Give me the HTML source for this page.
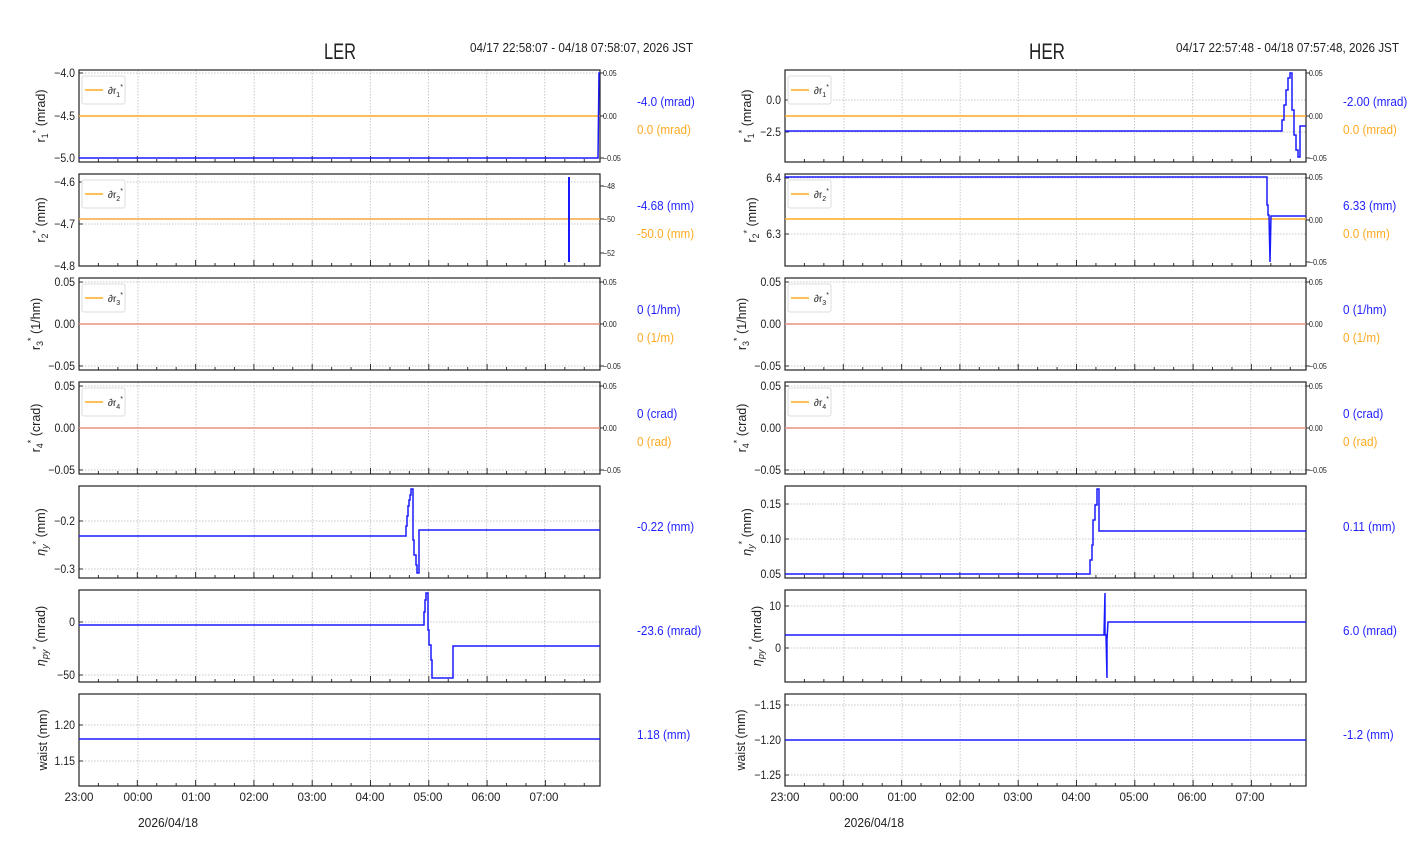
<!DOCTYPE html>
<html><head><meta charset="utf-8"><style>
body{margin:0;background:#fff;width:1412px;height:864px;overflow:hidden}
svg{display:block}
text{font-family:"Liberation Sans Narrow","Liberation Sans",sans-serif;fill:#222}
.t{font-size:12px}
.s{font-size:8px}
.b{fill:#1f1fff;font-size:13px}
.o{fill:#ffaa22;font-size:13px}
.yl{font-family:"DejaVu Sans","Liberation Sans",sans-serif;font-size:12.5px}
</style></head><body>
<svg id="g" width="1412" height="864" xmlns="http://www.w3.org/2000/svg">
<g id="dyn"></g>
<text x="340" y="59" text-anchor="middle" style="font-size:22px" textLength="32" lengthAdjust="spacingAndGlyphs">LER</text>
<text x="470" y="52" style="font-size:13px" textLength="223" lengthAdjust="spacingAndGlyphs">04/17 22:58:07 - 04/18 07:58:07, 2026 JST</text>
<text x="1047" y="59" text-anchor="middle" style="font-size:22px" textLength="36" lengthAdjust="spacingAndGlyphs">HER</text>
<text x="1176" y="52" style="font-size:13px" textLength="223" lengthAdjust="spacingAndGlyphs">04/17 22:57:48 - 04/18 07:57:48, 2026 JST</text>

<!-- LEFT y tick labels -->
<g class="t" text-anchor="end" transform="translate(75,0) scale(0.88,1) translate(-75,0)">
<text x="75" y="77">−4.0</text><text x="75" y="120">−4.5</text><text x="75" y="162">−5.0</text>
<text x="75" y="186">−4.6</text><text x="75" y="228">−4.7</text><text x="75" y="270">−4.8</text>
<text x="75" y="286">0.05</text><text x="75" y="328">0.00</text><text x="75" y="370">−0.05</text>
<text x="75" y="390">0.05</text><text x="75" y="432">0.00</text><text x="75" y="474">−0.05</text>
<text x="75" y="525">−0.2</text><text x="75" y="573">−0.3</text>
<text x="75" y="626">0</text><text x="75" y="679">−50</text>
<text x="75" y="729">1.20</text><text x="75" y="765">1.15</text>
</g>
<g class="s" transform="translate(603,0) scale(0.88,1) translate(-603,0)">
<text x="603" y="76">0.05</text><text x="603" y="119">0.00</text><text x="603" y="161">−0.05</text>
<text x="603" y="189">−48</text><text x="603" y="222">−50</text><text x="603" y="256">−52</text>
<text x="603" y="285">0.05</text><text x="603" y="327">0.00</text><text x="603" y="369">−0.05</text>
<text x="603" y="389">0.05</text><text x="603" y="431">0.00</text><text x="603" y="473">−0.05</text>
</g>
<!-- RIGHT y tick labels -->
<g class="t" text-anchor="end" transform="translate(781,0) scale(0.88,1) translate(-781,0)">
<text x="781" y="104">0.0</text><text x="781" y="136">−2.5</text>
<text x="781" y="182">6.4</text><text x="781" y="238">6.3</text>
<text x="781" y="286">0.05</text><text x="781" y="328">0.00</text><text x="781" y="370">−0.05</text>
<text x="781" y="390">0.05</text><text x="781" y="432">0.00</text><text x="781" y="474">−0.05</text>
<text x="781" y="508">0.15</text><text x="781" y="543">0.10</text><text x="781" y="578">0.05</text>
<text x="781" y="610">10</text><text x="781" y="652">0</text>
<text x="781" y="709">−1.15</text><text x="781" y="744">−1.20</text><text x="781" y="779">−1.25</text>
</g>
<g class="s" transform="translate(1309,0) scale(0.88,1) translate(-1309,0)">
<text x="1309" y="76">0.05</text><text x="1309" y="119">0.00</text><text x="1309" y="161">−0.05</text>
<text x="1309" y="180">0.05</text><text x="1309" y="223">0.00</text><text x="1309" y="265">−0.05</text>
<text x="1309" y="285">0.05</text><text x="1309" y="327">0.00</text><text x="1309" y="369">−0.05</text>
<text x="1309" y="389">0.05</text><text x="1309" y="431">0.00</text><text x="1309" y="473">−0.05</text>
</g>
<!-- x labels -->
<g class="t" text-anchor="middle">
<text x="79" y="801" textLength="29" lengthAdjust="spacingAndGlyphs">23:00</text><text x="138" y="801" textLength="29" lengthAdjust="spacingAndGlyphs">00:00</text><text x="196" y="801" textLength="29" lengthAdjust="spacingAndGlyphs">01:00</text><text x="254" y="801" textLength="29" lengthAdjust="spacingAndGlyphs">02:00</text><text x="312" y="801" textLength="29" lengthAdjust="spacingAndGlyphs">03:00</text><text x="370" y="801" textLength="29" lengthAdjust="spacingAndGlyphs">04:00</text><text x="428" y="801" textLength="29" lengthAdjust="spacingAndGlyphs">05:00</text><text x="486" y="801" textLength="29" lengthAdjust="spacingAndGlyphs">06:00</text><text x="544" y="801" textLength="29" lengthAdjust="spacingAndGlyphs">07:00</text>
<text x="785" y="801" textLength="29" lengthAdjust="spacingAndGlyphs">23:00</text><text x="844" y="801" textLength="29" lengthAdjust="spacingAndGlyphs">00:00</text><text x="902" y="801" textLength="29" lengthAdjust="spacingAndGlyphs">01:00</text><text x="960" y="801" textLength="29" lengthAdjust="spacingAndGlyphs">02:00</text><text x="1018" y="801" textLength="29" lengthAdjust="spacingAndGlyphs">03:00</text><text x="1076" y="801" textLength="29" lengthAdjust="spacingAndGlyphs">04:00</text><text x="1134" y="801" textLength="29" lengthAdjust="spacingAndGlyphs">05:00</text><text x="1192" y="801" textLength="29" lengthAdjust="spacingAndGlyphs">06:00</text><text x="1250" y="801" textLength="29" lengthAdjust="spacingAndGlyphs">07:00</text>
</g>
<text x="138" y="827" style="font-size:13px" textLength="60" lengthAdjust="spacingAndGlyphs">2026/04/18</text>
<text x="844" y="827" style="font-size:13px" textLength="60" lengthAdjust="spacingAndGlyphs">2026/04/18</text>

<!-- value labels -->
<g transform="translate(637,0) scale(0.9,1) translate(-637,0)">
<text x="637" y="106" class="b">-4.0 (mrad)</text><text x="637" y="134" class="o">0.0 (mrad)</text>
<text x="637" y="210" class="b">-4.68 (mm)</text><text x="637" y="238" class="o">-50.0 (mm)</text>
<text x="637" y="314" class="b">0 (1/hm)</text><text x="637" y="342" class="o">0 (1/m)</text>
<text x="637" y="418" class="b">0 (crad)</text><text x="637" y="446" class="o">0 (rad)</text>
<text x="637" y="531" class="b">-0.22 (mm)</text>
<text x="637" y="635" class="b">-23.6 (mrad)</text>
<text x="637" y="739" class="b">1.18 (mm)</text>
</g>
<g transform="translate(1343,0) scale(0.9,1) translate(-1343,0)">
<text x="1343" y="106" class="b">-2.00 (mrad)</text><text x="1343" y="134" class="o">0.0 (mrad)</text>
<text x="1343" y="210" class="b">6.33 (mm)</text><text x="1343" y="238" class="o">0.0 (mm)</text>
<text x="1343" y="314" class="b">0 (1/hm)</text><text x="1343" y="342" class="o">0 (1/m)</text>
<text x="1343" y="418" class="b">0 (crad)</text><text x="1343" y="446" class="o">0 (rad)</text>
<text x="1343" y="531" class="b">0.11 (mm)</text>
<text x="1343" y="635" class="b">6.0 (mrad)</text>
<text x="1343" y="739" class="b">-1.2 (mm)</text>
</g>

<!-- y axis labels -->
<g class="yl" text-anchor="middle">
<text transform="translate(45,116) rotate(-90)">r<tspan dy="3" font-size="9">1</tspan><tspan dy="-9" font-size="9">*</tspan><tspan dy="6"> (mrad)</tspan></text>
<text transform="translate(45,220) rotate(-90)">r<tspan dy="3" font-size="9">2</tspan><tspan dy="-9" font-size="9">*</tspan><tspan dy="6"> (mm)</tspan></text>
<text transform="translate(40,324) rotate(-90)">r<tspan dy="3" font-size="9">3</tspan><tspan dy="-9" font-size="9">*</tspan><tspan dy="6"> (1/hm)</tspan></text>
<text transform="translate(40,428) rotate(-90)">r<tspan dy="3" font-size="9">4</tspan><tspan dy="-9" font-size="9">*</tspan><tspan dy="6"> (crad)</tspan></text>
<text transform="translate(45,532) rotate(-90)"><tspan font-style="italic">η</tspan><tspan dy="3" font-size="9" font-style="italic">y</tspan><tspan dy="-9" font-size="9">*</tspan><tspan dy="6"> (mm)</tspan></text>
<text transform="translate(45,636) rotate(-90)"><tspan font-style="italic">η</tspan><tspan dy="3" font-size="9" font-style="italic">py</tspan><tspan dy="-9" font-size="9">*</tspan><tspan dy="6"> (mrad)</tspan></text>
<text transform="translate(47,740) rotate(-90)">waist (mm)</text>
<text transform="translate(751,116) rotate(-90)">r<tspan dy="3" font-size="9">1</tspan><tspan dy="-9" font-size="9">*</tspan><tspan dy="6"> (mrad)</tspan></text>
<text transform="translate(756,220) rotate(-90)">r<tspan dy="3" font-size="9">2</tspan><tspan dy="-9" font-size="9">*</tspan><tspan dy="6"> (mm)</tspan></text>
<text transform="translate(746,324) rotate(-90)">r<tspan dy="3" font-size="9">3</tspan><tspan dy="-9" font-size="9">*</tspan><tspan dy="6"> (1/hm)</tspan></text>
<text transform="translate(746,428) rotate(-90)">r<tspan dy="3" font-size="9">4</tspan><tspan dy="-9" font-size="9">*</tspan><tspan dy="6"> (crad)</tspan></text>
<text transform="translate(751,532) rotate(-90)"><tspan font-style="italic">η</tspan><tspan dy="3" font-size="9" font-style="italic">y</tspan><tspan dy="-9" font-size="9">*</tspan><tspan dy="6"> (mm)</tspan></text>
<text transform="translate(761,636) rotate(-90)"><tspan font-style="italic">η</tspan><tspan dy="3" font-size="9" font-style="italic">py</tspan><tspan dy="-9" font-size="9">*</tspan><tspan dy="6"> (mrad)</tspan></text>
<text transform="translate(745,740) rotate(-90)">waist (mm)</text>
</g>

<!-- legends -->
<g id="leg"></g>
<g style="font-size:10px">
<text x="108" y="94">∂r<tspan dy="3" font-size="7">1</tspan><tspan dy="-8" font-size="7">*</tspan></text>
<text x="108" y="198">∂r<tspan dy="3" font-size="7">2</tspan><tspan dy="-8" font-size="7">*</tspan></text>
<text x="108" y="302">∂r<tspan dy="3" font-size="7">3</tspan><tspan dy="-8" font-size="7">*</tspan></text>
<text x="108" y="406">∂r<tspan dy="3" font-size="7">4</tspan><tspan dy="-8" font-size="7">*</tspan></text>
<text x="814" y="94">∂r<tspan dy="3" font-size="7">1</tspan><tspan dy="-8" font-size="7">*</tspan></text>
<text x="814" y="198">∂r<tspan dy="3" font-size="7">2</tspan><tspan dy="-8" font-size="7">*</tspan></text>
<text x="814" y="302">∂r<tspan dy="3" font-size="7">3</tspan><tspan dy="-8" font-size="7">*</tspan></text>
<text x="814" y="406">∂r<tspan dy="3" font-size="7">4</tspan><tspan dy="-8" font-size="7">*</tspan></text>
</g>
</svg>
<script>
var NS="http://www.w3.org/2000/svg",D=document.getElementById('dyn'),L=document.getElementById('leg');
function el(p,t,a){var e=document.createElementNS(NS,t);for(var k in a)e.setAttribute(k,a[k]);p.appendChild(e);return e;}
var tops=[70,174,278,382,486,590,694],H=92;
var grids={L:[[73,116,158],[182,224],[282,324,366],[386,428,470],[521,569],[622,675],[725,761]],
R:[[100,132],[178,234],[282,324,366],[386,428,470],[504,539,574],[606,648],[705,740,775]]};
var rgrids=[[73,116,158],[186,219,253],[282,324,366],[386,428,470]];
[[79,600,'L',138],[785,1306,'R',844]].forEach(function(s){
 var x0=s[0],x1=s[1],h0=s[3];
 tops.forEach(function(t,i){
  for(var h=0;h<8;h++){var x=h0+h*58.1;el(D,'line',{x1:x,x2:x,y1:t,y2:t+H,stroke:'#c8c8c8','stroke-dasharray':'1.5,1.5','stroke-width':1});}
  grids[s[2]][i].forEach(function(y){el(D,'line',{x1:x0,x2:x1,y1:y,y2:y,stroke:'#c8c8c8','stroke-dasharray':'1.5,1.5'});});
  for(var m=0;m<27;m++){var x=x0+m*58.3/3;if(x>x1)break;var maj=m%3==0;el(D,'line',{x1:x,x2:x,y1:t+H,y2:t+H-(maj?6:3),stroke:'#333'});}
  grids[s[2]][i].forEach(function(y){el(D,'line',{x1:x0,x2:x0+4,y1:y,y2:y,stroke:'#333'});});
  if(i<4){var rg=s[2]=='L'?rgrids[i]:[[73,116,158],[178,220,262],[282,324,366],[386,428,470]][i];
   rg.forEach(function(y){el(D,'line',{x1:x1,x2:x1+4,y1:y,y2:y,stroke:'#333'});});}
  el(D,'rect',{x:x0,y:t,width:x1-x0,height:H,fill:'none',stroke:'#222','stroke-width':1.2});
  if(i<4){el(L,'rect',{x:x0+3,y:t+6,width:43,height:28,rx:2,fill:'#fff',stroke:'#ddd'});
   el(L,'line',{x1:x0+6,x2:x0+24,y1:t+20,y2:t+20,stroke:'#ffaa22','stroke-width':1.5});}
 });
});
function pl(pts,c,w){el(D,'polyline',{points:pts,fill:'none',stroke:c,'stroke-width':w||1.5});}
var O='#ffaa22',B='#1a1aff';
pl('79,116 600,116',O);pl('79,158 598,158 599,73 600,73',B);
pl('79,219 600,219','#f0a080');pl('79,219 600,219',O,1);pl('569,177 569,262',B,2);
pl('79,324 600,324','#e89080');pl('79,428 600,428','#e89080');
pl('79,536 406,536 406,526 407,526 407,516 408,516 408,506 409,506 409,500 410,500 410,495 411,495 411,489 413,489 413,540 414,540 414,555 416,555 416,565 417,565 417,573 419,573 419,530 600,530',B);
pl('79,625 424,625 424,612 425,612 425,600 426,600 426,593 428,593 428,630 429,630 429,645 431,645 431,660 432,660 432,678 453,678 453,646 600,646',B);
pl('79,739 600,739',B);
pl('785,116 1306,116',O);
pl('785,131 1282,131 1282,120 1284,120 1284,105 1286,105 1286,90 1288,90 1288,78 1290,78 1290,73 1292,73 1292,110 1294,110 1294,135 1296,135 1296,150 1298,150 1298,157 1300,157 1300,126 1306,126',B);
pl('785,219 1306,219',O);pl('785,177 1267,177 1267,205 1268,205 1268,215 1269,215 1270,262 1271,216 1306,216',B);
pl('785,324 1306,324','#e89080');pl('785,428 1306,428','#e89080');
pl('785,574 1090,574 1090,560 1092,560 1092,545 1093,545 1093,520 1095,520 1095,505 1097,505 1097,489 1099,489 1099,531 1306,531',B);
pl('785,635 1104,635 1105,593 1105,635 1106,635 1107,678 1107,640 1108,622 1306,622',B);
pl('785,740 1306,740',B);
</script>
</body></html>
